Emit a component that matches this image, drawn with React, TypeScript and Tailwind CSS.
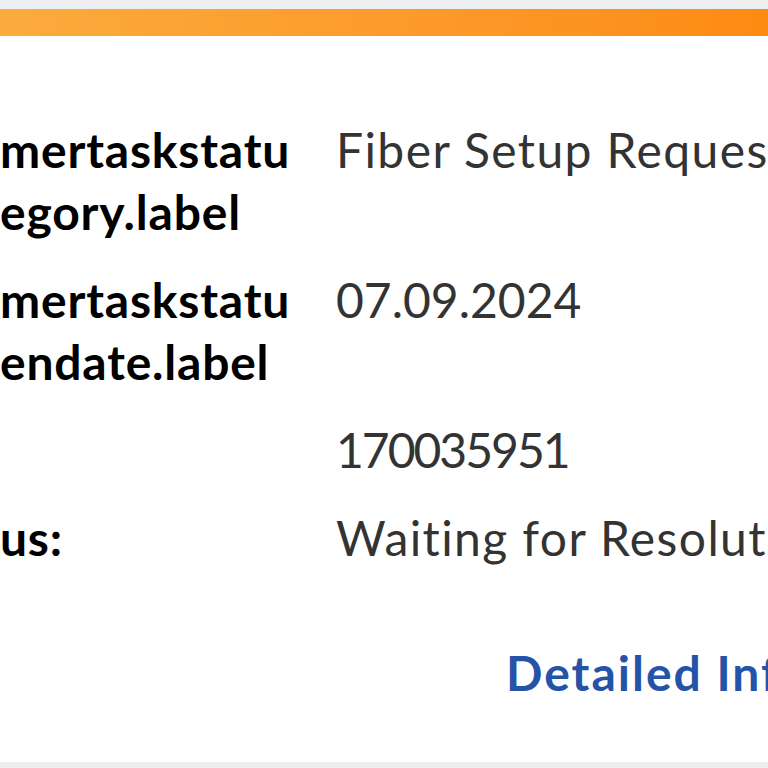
const rows = [
  { label: ["mertaskstatu", "egory.label"], value: "Fiber Setup Request", track: "tracking-[1.4px]" },
  { label: ["mertaskstatu", "endate.label"], value: "07.09.2024", track: "tracking-[0px]" },
  { label: [""], value: "170035951", track: "tracking-[-2px]" },
  { label: ["us:"], value: "Waiting for Resolution", track: "tracking-[1.4px]" },
];

export default function App() {
  return (
    <div className="w-[768px] h-[768px] overflow-hidden bg-[#eceef0] pt-[9px] font-['Lato',sans-serif]">
      <div className="bg-white w-[900px]">
        <div className="h-[27px] w-[768px] bg-gradient-to-r from-[#fbab3d] to-[#fd8b12]" />
        <div className="pt-[83px] pb-[58px]">
          <div className="flex flex-col gap-[26px]">
            {rows.map((row, i) => (
              <div key={i} className="flex text-[48px] leading-[62px]">
                <div className="w-[336px] shrink-0 font-bold text-black tracking-[0.8px]">
                  {row.label.map((l, j) => (
                    <div key={j} className="h-[62px] whitespace-nowrap">{l}</div>
                  ))}
                </div>
                <div className={`whitespace-nowrap text-[#333333] ${row.track}`}>{row.value}</div>
              </div>
            ))}
          </div>
          <div className="mt-[73px] pl-[506px] whitespace-nowrap text-[48px] leading-[62px] font-bold text-[#2553a8] tracking-[2px]">
            Detailed Information
          </div>
        </div>
      </div>
    </div>
  );
}
